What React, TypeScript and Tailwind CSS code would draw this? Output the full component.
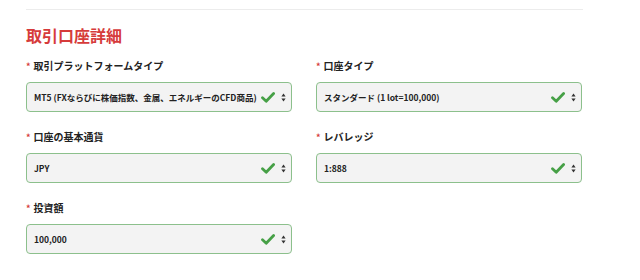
import React from "react";

const FONT = {
  fontFamily: '"Noto Sans CJK JP", "Noto Sans", "Liberation Sans", sans-serif',
};

type Field = { label: string; value: string };

const FIELDS: Field[] = [
  { label: "取引プラットフォームタイプ", value: "MT5 (FXならびに株価指数、金属、エネルギーのCFD商品)" },
  { label: "口座タイプ", value: "スタンダード (1 lot=100,000)" },
  { label: "口座の基本通貨", value: "JPY" },
  { label: "レバレッジ", value: "1:888" },
  { label: "投資額", value: "100,000" },
];

function Check() {
  return (
    <svg width="14" height="11" viewBox="0 0 14 11" className="shrink-0 relative">
      <path d="M1.5 5.8 L5.2 9.2 L12.6 1.6" fill="none" stroke="#46a046" strokeWidth="2.8" strokeLinecap="round" strokeLinejoin="round" />
    </svg>
  );
}

function Arrows() {
  return (
    <svg width="5" height="9" viewBox="0 0 5 9" className="shrink-0">
      <path d="M2.5 0.5 L4.6 3.6 L0.4 3.6 Z" fill="#333" />
      <path d="M2.5 8.5 L4.6 5.4 L0.4 5.4 Z" fill="#333" />
    </svg>
  );
}

function SelectField({ label, value }: Field) {
  return (
    <div className="flex flex-col">
      <div className="h-4 flex items-center text-[10px] font-bold text-[#222] leading-none">
        <span className="text-[#d63b3b] mr-[3px] text-[9px]">*</span>
        {label}
      </div>
      <div className="mt-2 h-[30px] rounded-[4px] border border-[#8cc08c] bg-[#f3f3f3] flex items-center pl-[7px] pr-[5px]">
        <span className="flex-1 min-w-0 text-[8.5px] font-bold text-[#222] whitespace-nowrap">{value}</span>
        <Check />
        <span className="ml-[6px]">
          <Arrows />
        </span>
      </div>
    </div>
  );
}

export default function App() {
  return (
    <div className="w-[640px] h-[280px] bg-white overflow-hidden" style={FONT}>
      <div className="ml-[26px] w-[557px] pt-[9px]">
        <div className="h-px bg-[#ececec]" />
        <h2 className="mt-[15px] text-[16px] leading-[20px] font-bold text-[#d63b3b]">取引口座詳細</h2>
        <div className="mt-[13px] grid grid-cols-2 gap-x-[24px] gap-y-[17px] w-[556px]">
          {FIELDS.map((f) => (
            <SelectField key={f.label} {...f} />
          ))}
        </div>
      </div>
    </div>
  );
}
